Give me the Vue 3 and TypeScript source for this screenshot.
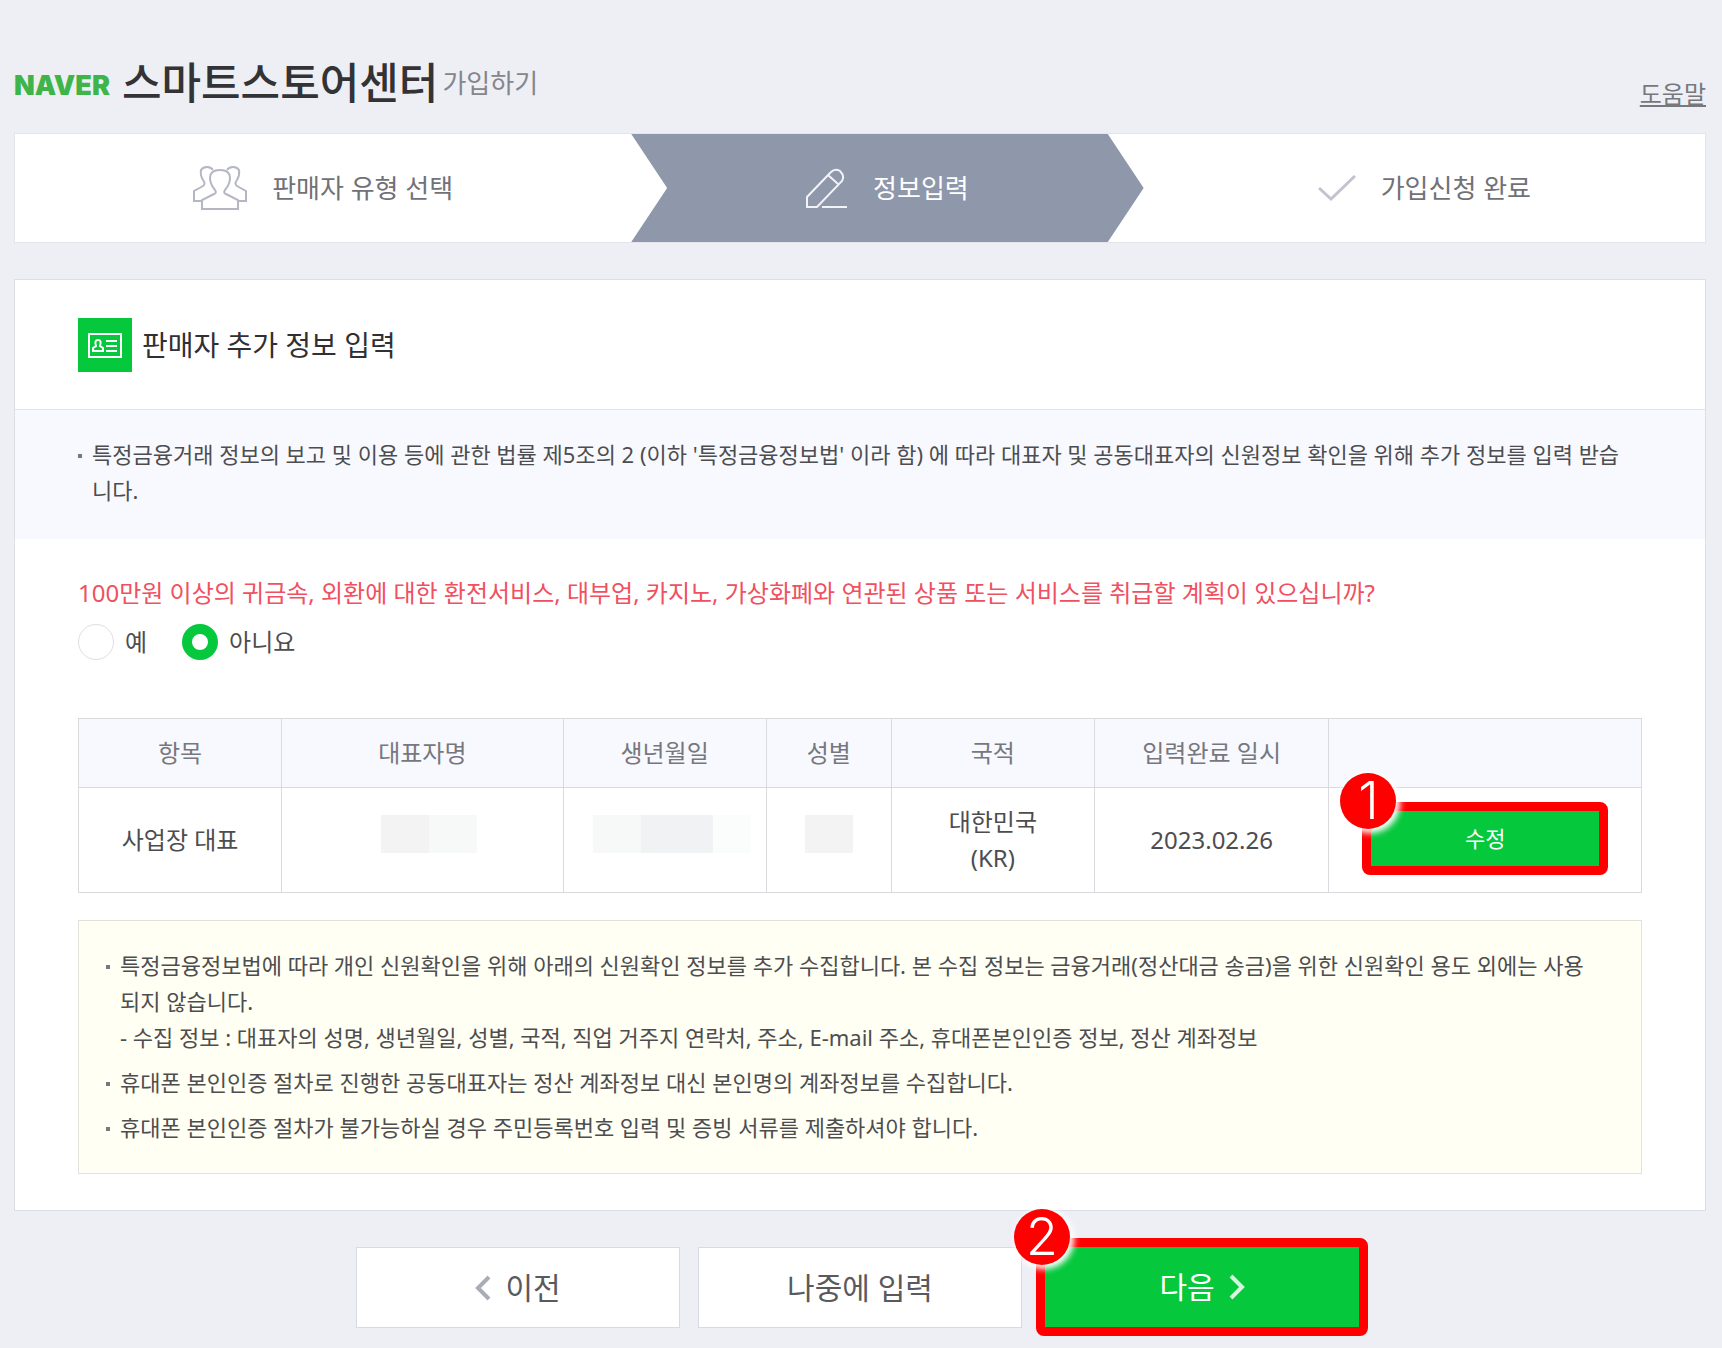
<script setup lang="ts">
import { ref } from 'vue'

interface Column {
  label: string
  width: string
}

const columns: Column[] = [
  { label: '항목', width: '13%' },
  { label: '대표자명', width: '18%' },
  { label: '생년월일', width: '13%' },
  { label: '성별', width: '8%' },
  { label: '국적', width: '13%' },
  { label: '입력완료 일시', width: '15%' },
  { label: '', width: '20%' },
]

const plan = ref<'yes' | 'no'>('no')
</script>

<template>
  <div class="page">
    <header class="header">
      <h1 class="brand">
        <span class="naver">NAVER</span>
        <span class="center-name">스마트스토어센터</span>
        <span class="join">가입하기</span>
      </h1>
      <a class="help" href="#">도움말</a>
    </header>

    <ol class="steps">
      <li class="step">
        <svg width="54" height="44" viewBox="0 0 54 44" fill="none" stroke="#b4b6c3" stroke-width="2">
          <path d="M9 43V34L21 28Q24 27 22 24Q17 18 17 12Q17 4 27 4Q37 4 37 12Q37 18 32 24Q30 27 33 28L45 34V43Z" />
          <path d="M9 35H1V25L10 20Q13 18 10 14Q7 9 8 4Q10 1 14 1Q18 1 20 4" />
          <path d="M45 35H53V25L44 20Q41 18 44 14Q47 9 46 4Q44 1 40 1Q36 1 34 4" />
        </svg>
        <span>판매자 유형 선택</span>
      </li>
      <li class="step current" aria-current="step">
        <svg width="42" height="40" viewBox="0 0 42 40" fill="none" stroke="#f2f3f7" stroke-width="2">
          <path d="M1 39V29L25 4Q29 0 34 3Q39 8 36 13L11 39Z" />
          <path d="M22 7L32 16M16 39H41" />
        </svg>
        <span>정보입력</span>
      </li>
      <li class="step">
        <svg width="38" height="26" viewBox="0 0 38 26" fill="none" stroke="#c3c3cf" stroke-width="3">
          <path d="M1 13L13 24L37 1" />
        </svg>
        <span>가입신청 완료</span>
      </li>
    </ol>

    <main class="panel">
      <div class="panel-head">
        <svg class="id-icon" width="54" height="54" viewBox="0 0 54 54" fill="none" stroke="#fff" stroke-width="2">
          <rect x="11" y="16" width="32" height="23" />
          <path d="M18 28Q16 22 20 22Q24 22 22 28L25 30V33H15V30Z" />
          <path d="M28 23H39M28 28H39M28 33H39" />
        </svg>
        <h2>판매자 추가 정보 입력</h2>
      </div>

      <ul class="notice list">
        <li>
          특정금융거래 정보의 보고 및 이용 등에 관한 법률 제5조의 2 (이하 '특정금융정보법' 이라 함) 에 따라 대표자 및 공동대표자의 신원정보 확인을 위해 추가 정보를 입력 받습니다.
        </li>
      </ul>

      <div class="content">
        <fieldset class="question">
          <legend>100만원 이상의 귀금속, 외환에 대한 환전서비스, 대부업, 카지노, 가상화폐와 연관된 상품 또는 서비스를 취급할 계획이 있으십니까?</legend>
          <div class="options">
            <label><input v-model="plan" type="radio" name="plan" value="yes" />예</label>
            <label><input v-model="plan" type="radio" name="plan" value="no" />아니요</label>
          </div>
        </fieldset>

        <table class="owners">
          <colgroup>
            <col v-for="(c, i) in columns" :key="i" :style="{ width: c.width }" />
          </colgroup>
          <thead>
            <tr>
              <th v-for="(c, i) in columns" :key="i" scope="col">{{ c.label }}</th>
            </tr>
          </thead>
          <tbody>
            <tr>
              <td>사업장 대표</td>
              <td>
                <div class="masked name"><i class="m2"></i><i class="m1"></i></div>
              </td>
              <td>
                <div class="masked birth"><i class="m1"></i><i class="m3"></i><i class="m0"></i></div>
              </td>
              <td>
                <div class="masked gender"><i class="m2"></i></div>
              </td>
              <td>대한민국<br />(KR)</td>
              <td>2023.02.26</td>
              <td class="action">
                <div class="marked">
                  <button type="button" class="edit">수정</button>
                  <span class="badge">1</span>
                </div>
              </td>
            </tr>
          </tbody>
        </table>

        <ul class="guide list">
          <li>
            특정금융정보법에 따라 개인 신원확인을 위해 아래의 신원확인 정보를 추가 수집합니다. 본 수집 정보는 금융거래(정산대금 송금)을 위한 신원확인 용도 외에는 사용되지 않습니다.<br />
            - 수집 정보 : 대표자의 성명, 생년월일, 성별, 국적, 직업 거주지 연락처, 주소, E-mail 주소, 휴대폰본인인증 정보, 정산 계좌정보
          </li>
          <li>휴대폰 본인인증 절차로 진행한 공동대표자는 정산 계좌정보 대신 본인명의 계좌정보를 수집합니다.</li>
          <li>휴대폰 본인인증 절차가 불가능하실 경우 주민등록번호 입력 및 증빙 서류를 제출하셔야 합니다.</li>
        </ul>
      </div>
    </main>

    <div class="buttons">
      <button type="button" class="plain">
        <svg width="16" height="26" viewBox="0 0 16 26" fill="none" stroke="#a9adb8" stroke-width="4">
          <path d="M14 2L3 13L14 24" />
        </svg>
        이전
      </button>
      <button type="button" class="plain">나중에 입력</button>
      <div class="marked next-wrap">
        <button type="button" class="next">
          다음
          <svg width="16" height="26" viewBox="0 0 16 26" fill="none" stroke="#d6f7dd" stroke-width="4">
            <path d="M2 2L13 13L2 24" />
          </svg>
        </button>
        <span class="badge">2</span>
      </div>
    </div>
  </div>
</template>

<style>
body {
  margin: 0;
  background: #eeeff5;
}
</style>

<style scoped>
.page {
  box-sizing: border-box;
  min-height: 100vh;
  padding: 0 16px 20px 14px;
  background: #eeeff5;
  color: #4d4d50;
  font-family: 'Noto Sans', 'Noto Sans CJK KR', sans-serif;
  font-weight: 400;
  font-size: 24px;
  line-height: 36px;
}

.header {
  display: flex;
  justify-content: space-between;
  align-items: flex-end;
  height: 133px;
  box-sizing: border-box;
  padding-bottom: 17px;
}

.brand {
  display: flex;
  align-items: center;
  margin: 0;
  font-weight: 400;
  line-height: 60px;
}

.naver {
  margin: 6px 12px 0 0;
  color: #3fb549;
  font-family: Inter, sans-serif;
  font-size: 27px;
  font-weight: 900;
}

.center-name {
  margin-right: 4px;
  color: #333336;
  font-size: 43px;
  font-weight: 500;
}

.join {
  color: #85858a;
  font-size: 26px;
}

.help {
  margin-bottom: 4px;
  color: #77777e;
  text-decoration: underline;
  text-underline-offset: 2px;
}

.steps {
  display: grid;
  grid-template-columns: 617fr 513fr 562fr;
  height: 110px;
  margin: 0;
  padding: 0;
  box-sizing: border-box;
  border: 1px solid #e4e5ec;
  background: #fff;
  list-style: none;
}

.step {
  display: flex;
  align-items: center;
  justify-content: center;
  gap: 25px;
  color: #717178;
  font-size: 26px;
}

.current {
  background: #8f97ab;
  color: #fff;
  clip-path: polygon(0 0, 93% 0, 100% 50%, 93% 100%, 0 100%, 7% 50%);
}

.panel {
  margin-top: 36px;
  border: 1px solid #dcdde5;
  background: #fff;
}

.panel-head {
  display: flex;
  align-items: center;
  gap: 10px;
  height: 129px;
  padding: 0 63px;
  border-bottom: 1px solid #e3e4ea;
}

.id-icon {
  background: #06c83c;
}

h2 {
  margin: 0;
  color: #303033;
  font-size: 28px;
  font-weight: 400;
}

.list {
  margin: 0;
  list-style: none;
  font-size: 22px;
}

.list li {
  position: relative;
  padding: 0 15px 0 14px;
}

.list li::before {
  content: '';
  position: absolute;
  top: 18px;
  left: 0;
  width: 4px;
  height: 4px;
  background: #77777c;
}

.notice {
  padding: 26px 63px 31px;
  background: #f8f9fe;
}

.content {
  padding: 36px 63px;
}

.question {
  margin: 0 0 58px;
  padding: 0;
  border: 0;
}

legend {
  padding: 0;
  color: #f0505f;
}

.options {
  display: flex;
  gap: 35px;
  margin-top: 13px;
}

.options label {
  display: flex;
  align-items: center;
  gap: 11px;
}

.options input {
  appearance: none;
  width: 36px;
  height: 36px;
  margin: 0;
  box-sizing: border-box;
  border: 1px solid #dedee0;
  border-radius: 50%;
  background: #fff;
}

.options input:checked {
  border: 10px solid #06c83c;
}

.owners {
  width: 100%;
  table-layout: fixed;
  border-collapse: collapse;
  text-align: center;
}

.owners th,
.owners td {
  height: 68px;
  padding: 0;
  border: 1px solid #dadade;
}

.owners th {
  background: #f8f9fe;
  color: #77777e;
  font-weight: 400;
}

.owners td {
  height: 104px;
}

.masked {
  display: flex;
  justify-content: center;
  height: 38px;
  margin-top: -12px;
}

.masked i {
  flex: none;
  width: 48px;
}

.masked.name {
  padding-left: 14px;
}

.masked.birth {
  padding-left: 14px;
}

.masked .m0 {
  width: 38px;
  background: #fbfcfc;
}

.masked .m1 {
  background: #f7f8f8;
}

.masked .m2 {
  background: #f3f3f3;
}

.masked .m3 {
  width: 72px;
  background: #f1f2f3;
}

button {
  box-sizing: border-box;
  padding: 0;
  font-family: inherit;
  line-height: 36px;
}

.owners .action {
  height: 100px;
  padding: 0 33px 4px;
}

.marked {
  position: relative;
}

.edit,
.next {
  display: flex;
  align-items: center;
  justify-content: center;
  width: 100%;
  border: 9px solid #fe0000;
  border-radius: 8px;
  background: #06c83c;
  color: #fff;
}

.edit {
  height: 73px;
  font-size: 22px;
}

.badge {
  position: absolute;
  top: -29px;
  left: -22px;
  width: 56px;
  height: 56px;
  border-radius: 50%;
  background: #fe0000;
  box-shadow: 2px 2px 6px 2px #fff;
  color: #fff;
  font-family: Inter, sans-serif;
  font-size: 52px;
  font-weight: 300;
  line-height: 56px;
  text-align: center;
}

.guide {
  margin-top: 27px;
  padding: 26px 28px 28px 27px;
  border: 1px solid #e2e2d8;
  background: #fffff3;
}

.guide li + li {
  margin-top: 9px;
}

.buttons {
  display: flex;
  justify-content: center;
  gap: 18px;
  margin-top: 36px;
}

.plain,
.next {
  gap: 14px;
  font-size: 30px;
}

.plain {
  display: flex;
  align-items: center;
  justify-content: center;
  width: 324px;
  height: 81px;
  border: 1px solid #d9dae0;
  background: #fff;
  color: #5a5a5e;
}

.next-wrap {
  width: 332px;
  margin: -9px -4px;
}

.next {
  height: 98px;
}
</style>
